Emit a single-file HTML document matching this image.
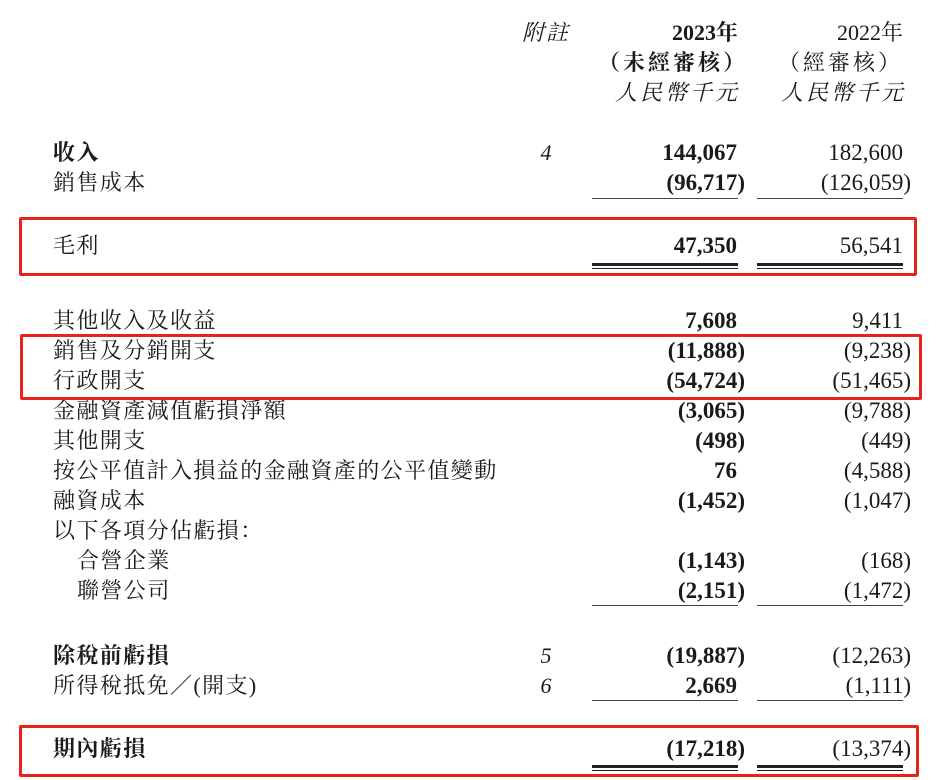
<!DOCTYPE html>
<html><head><meta charset="utf-8"><style>
body{margin:0;width:936px;height:780px;background:#fff;position:relative;overflow:hidden;font-family:"Liberation Serif","Noto Serif CJK SC",serif;color:#1a1a1a;}
.t{position:absolute;font-size:21px;line-height:30px;white-space:nowrap;}
.l{left:53px;letter-spacing:1.4px;font-size:22px}
.i{left:77px;letter-spacing:1.4px;font-size:22px}
.n{left:536px;font-style:italic;width:20px;text-align:center;font-size:22px}
.a{right:191px;text-align:right;font-weight:bold;font-size:23px}
.b{right:25px;text-align:right;font-size:23px}
.p{padding-right:8px}
.bd{font-weight:bold}
.h{font-size:22px;letter-spacing:3px}
.u{position:absolute;height:1px;background:#444}
.d{position:absolute;height:6px;border-top:3px solid #222;border-bottom:1px solid #222;box-sizing:border-box}
.box{position:absolute;border:3px solid #e8231c;border-radius:2px;box-sizing:border-box}
</style></head><body>
<div class="t h" style="left:522px;top:18px;font-style:italic;letter-spacing:2px">附註</div>
<div class="t a h" style="top:18px;right:198px;letter-spacing:0;font-size:22px">2023年</div>
<div class="t a h" style="top:48px;right:188px;font-size:22px">（未經審核）</div>
<div class="t a h" style="top:78px;right:196px;font-style:italic;font-weight:normal;font-size:22px">人民幣千元</div>
<div class="t b h" style="top:18px;right:33px;letter-spacing:0;font-size:22px">2022年</div>
<div class="t b h" style="top:48px;right:33px;font-size:22px">（經審核）</div>
<div class="t b h" style="top:78px;right:30px;font-style:italic;font-size:22px">人民幣千元</div>

<div class="t l bd" style="top:138px">收入</div><div class="t n" style="top:138px">4</div><div class="t a p" style="top:138px">144,067</div><div class="t b p" style="top:138px">182,600</div>
<div class="t l" style="top:168px">銷售成本</div><div class="t a" style="top:168px">(96,717)</div><div class="t b" style="top:168px">(126,059)</div>
<div class="u" style="left:592px;width:146px;top:198px"></div><div class="u" style="left:757px;width:146px;top:198px"></div>

<div class="t l" style="top:231px">毛利</div><div class="t a p" style="top:231px">47,350</div><div class="t b p" style="top:231px">56,541</div>
<div class="d" style="left:592px;width:146px;top:263px"></div><div class="d" style="left:757px;width:146px;top:263px"></div>

<div class="t l" style="top:306px">其他收入及收益</div><div class="t a p" style="top:306px">7,608</div><div class="t b p" style="top:306px">9,411</div>
<div class="t l" style="top:336px">銷售及分銷開支</div><div class="t a" style="top:336px">(11,888)</div><div class="t b" style="top:336px">(9,238)</div>
<div class="t l" style="top:366px">行政開支</div><div class="t a" style="top:366px">(54,724)</div><div class="t b" style="top:366px">(51,465)</div>
<div class="t l" style="top:396px">金融資產減值虧損淨額</div><div class="t a" style="top:396px">(3,065)</div><div class="t b" style="top:396px">(9,788)</div>
<div class="t l" style="top:426px">其他開支</div><div class="t a" style="top:426px">(498)</div><div class="t b" style="top:426px">(449)</div>
<div class="t l" style="top:456px">按公平值計入損益的金融資產的公平值變動</div><div class="t a p" style="top:456px">76</div><div class="t b" style="top:456px">(4,588)</div>
<div class="t l" style="top:486px">融資成本</div><div class="t a" style="top:486px">(1,452)</div><div class="t b" style="top:486px">(1,047)</div>
<div class="t l" style="top:516px">以下各項分佔虧損：</div>
<div class="t i" style="top:546px">合營企業</div><div class="t a" style="top:546px">(1,143)</div><div class="t b" style="top:546px">(168)</div>
<div class="t i" style="top:576px">聯營公司</div><div class="t a" style="top:576px">(2,151)</div><div class="t b" style="top:576px">(1,472)</div>
<div class="u" style="left:592px;width:146px;top:605px"></div><div class="u" style="left:757px;width:146px;top:605px"></div>

<div class="t l bd" style="top:641px">除稅前虧損</div><div class="t n" style="top:641px">5</div><div class="t a" style="top:641px">(19,887)</div><div class="t b" style="top:641px">(12,263)</div>
<div class="t l" style="top:671px">所得稅抵免／(開支)</div><div class="t n" style="top:671px">6</div><div class="t a p" style="top:671px">2,669</div><div class="t b" style="top:671px">(1,111)</div>
<div class="u" style="left:592px;width:146px;top:700px"></div><div class="u" style="left:757px;width:146px;top:700px"></div>

<div class="t l bd" style="top:734px">期內虧損</div><div class="t a" style="top:734px">(17,218)</div><div class="t b" style="top:734px">(13,374)</div>
<div class="d" style="left:592px;width:146px;top:765px"></div><div class="d" style="left:757px;width:146px;top:765px"></div>

<div class="box" style="left:19px;top:217px;width:898px;height:59px"></div>
<div class="box" style="left:20px;top:334px;width:902px;height:66px"></div>
<div class="box" style="left:19px;top:725px;width:900px;height:52px"></div>
</body></html>
